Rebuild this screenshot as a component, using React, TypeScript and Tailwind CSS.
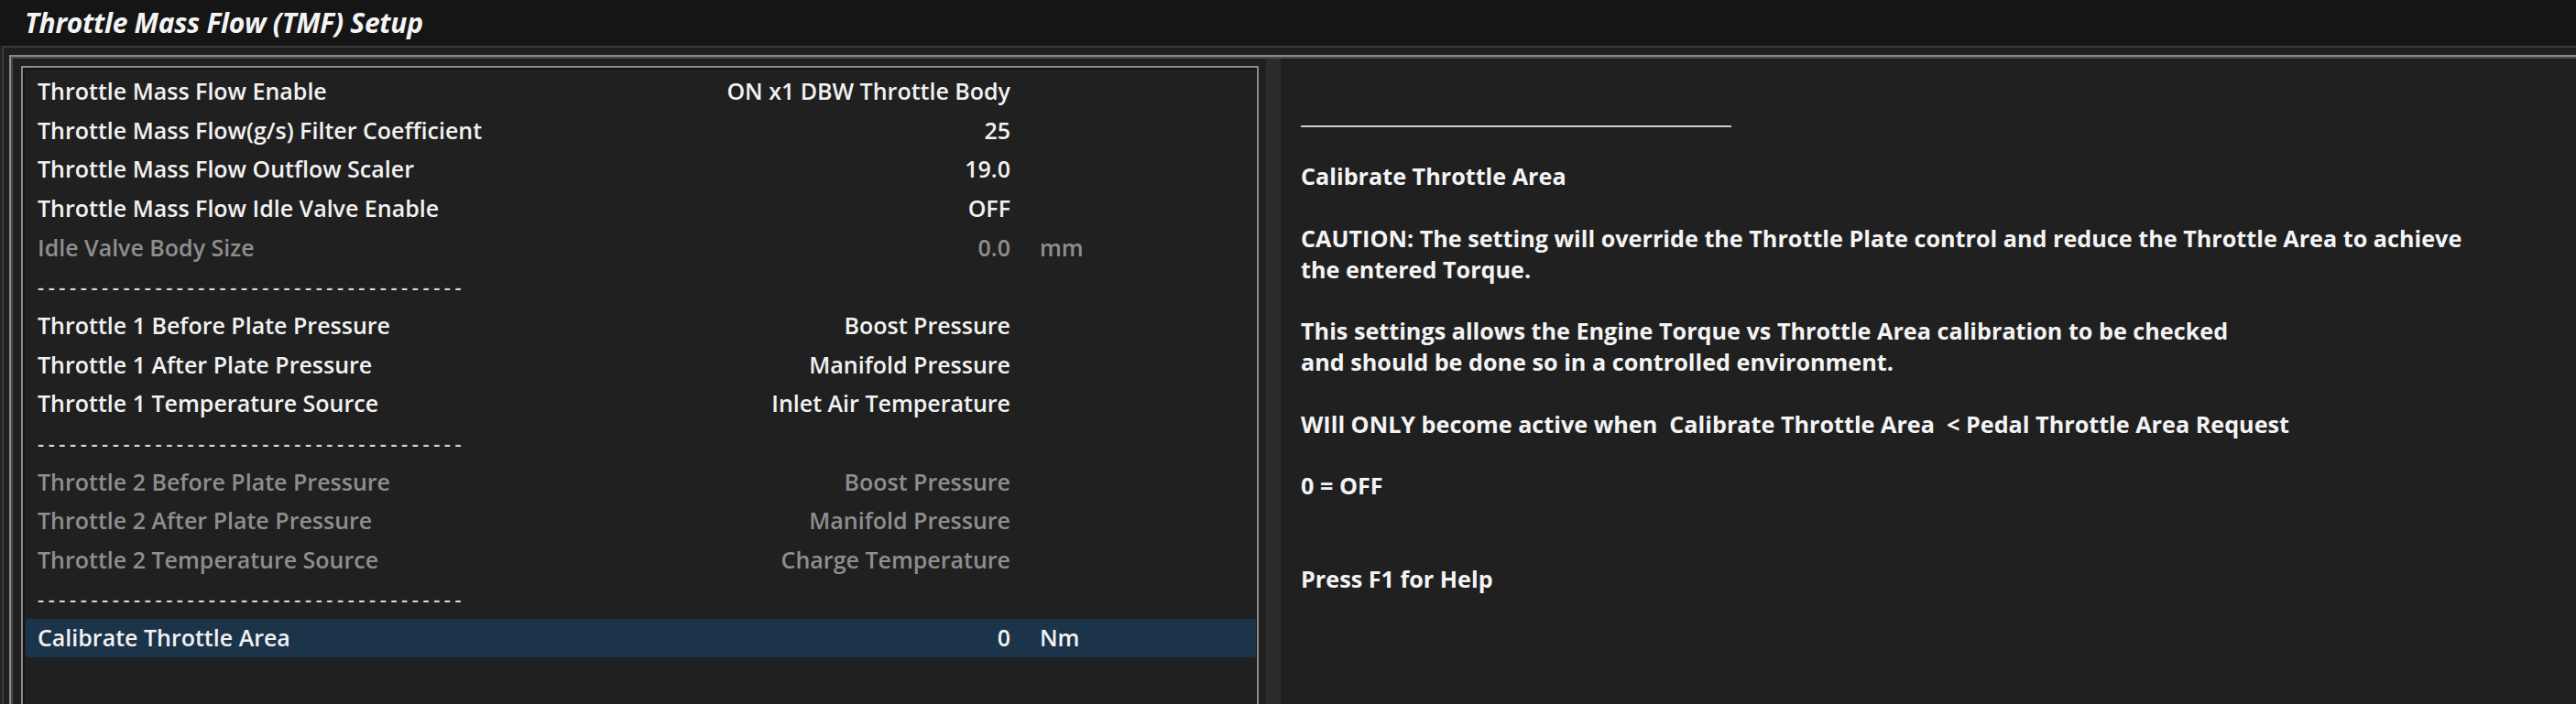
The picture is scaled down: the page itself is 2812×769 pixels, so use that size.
import React from "react";

type Row =
  | { kind: "item"; label: string; value: string; unit?: string; disabled?: boolean; selected?: boolean }
  | { kind: "dash" };

const rows: Row[] = [
  { kind: "item", label: "Throttle Mass Flow Enable", value: "ON x1 DBW Throttle Body" },
  { kind: "item", label: "Throttle Mass Flow(g/s) Filter Coefficient", value: "25" },
  { kind: "item", label: "Throttle Mass Flow Outflow Scaler", value: "19.0" },
  { kind: "item", label: "Throttle Mass Flow Idle Valve Enable", value: "OFF" },
  { kind: "item", label: "Idle Valve Body Size", value: "0.0", unit: "mm", disabled: true },
  { kind: "dash" },
  { kind: "item", label: "Throttle 1 Before Plate Pressure", value: "Boost Pressure" },
  { kind: "item", label: "Throttle 1 After Plate Pressure", value: "Manifold Pressure" },
  { kind: "item", label: "Throttle 1 Temperature Source", value: "Inlet Air Temperature" },
  { kind: "dash" },
  { kind: "item", label: "Throttle 2 Before Plate Pressure", value: "Boost Pressure", disabled: true },
  { kind: "item", label: "Throttle 2 After Plate Pressure", value: "Manifold Pressure", disabled: true },
  { kind: "item", label: "Throttle 2 Temperature Source", value: "Charge Temperature", disabled: true },
  { kind: "dash" },
  { kind: "item", label: "Calibrate Throttle Area", value: "0", unit: "Nm", selected: true },
];

const helpLines: string[] = [
  "",
  "Calibrate Throttle Area",
  "",
  "CAUTION: The setting will override the Throttle Plate control and reduce the Throttle Area to achieve",
  "the entered Torque.",
  "",
  "This settings allows the Engine Torque vs Throttle Area calibration to be checked",
  "and should be done so in a controlled environment.",
  "",
  "WIll ONLY become active when  Calibrate Throttle Area  < Pedal Throttle Area Request",
  "",
  "0 = OFF",
  "",
  "",
  "Press F1 for Help",
];

export default function App() {
  return (
    <div
      className="w-[2812px] h-[769px] bg-[#202020] overflow-hidden flex flex-col"
      style={{ fontFamily: '"Open Sans", "Noto Sans", sans-serif' }}
    >
      {/* Title bar */}
      <div className="h-[50px] shrink-0 bg-[#151515] flex items-center pl-[27px]">
        <span className="text-[30px] font-bold italic text-[#f4f4f4] leading-none tracking-[-0.3px]">
          Throttle Mass Flow (TMF) Setup
        </span>
      </div>

      {/* Body outer frame */}
      <div className="flex-1 min-h-0 ml-[2px] border-t-[2px] border-l-[2px] border-[#3a3a3a] pt-[8px] pl-[6px] flex flex-col">
        <div className="flex-1 min-h-0 border-t-[2px] border-l-[2px] border-[#8a8a8a] flex flex-col">
          <div className="flex-1 min-h-0 border-t-[2px] border-l-[2px] border-[#4a4a4a] flex">
            {/* Left panel */}
            <div className="ml-[9px] mt-[8px] w-[1351px] shrink-0 border-t-[2px] border-l-[2px] border-r-[2px] border-[#8c8c8c] flex flex-col">
              <div className="flex-1 border-t-[2px] border-l-[2px] border-r-[1px] border-[#141414] pl-[1px] pt-[2px]">
                {rows.map((r, i) =>
                  r.kind === "dash" ? (
                    <div key={i} className="h-[42.7px] flex items-center pl-[13px]">
                      <span className="text-[22px] font-semibold text-[#d8d8d8] tracking-[4.6px] leading-none">
                        ----------------------------------------
                      </span>
                    </div>
                  ) : (
                    <div
                      key={i}
                      className={
                        "h-[42.7px] flex items-center pl-[13px] text-[25px] font-semibold leading-none " +
                        (r.selected ? "bg-[#1b344a] rounded-[3px] " : "") +
                        (r.disabled ? "text-[#8e8e8e]" : "text-[#f2f2f2]")
                      }
                    >
                      <span className="flex-1 whitespace-nowrap">{r.label}</span>
                      <span className="w-[500px] text-right whitespace-nowrap">{r.value}</span>
                      <span className="w-[268px] pl-[32px] whitespace-nowrap">{r.unit ?? ""}</span>
                    </div>
                  )
                )}
              </div>
            </div>

            {/* Scrollbar strip */}
            <div className="ml-[8px] w-[16px] shrink-0 bg-[#2a2b2d]" />

            {/* Right help panel */}
            <div className="flex-1 pl-[22px] pt-[44.5px] text-[#f4f4f4] font-bold">
              <div className="h-[33.8px] flex items-end pb-[3px]">
                <div className="w-[470px] h-[2px] bg-[#cfcfcf]" />
              </div>
              {helpLines.map((l, i) => (
                <div key={i} className="h-[33.8px] flex items-center text-[25.2px] leading-none whitespace-pre">
                  {l}
                </div>
              ))}
            </div>
          </div>
        </div>
      </div>
    </div>
  );
}
